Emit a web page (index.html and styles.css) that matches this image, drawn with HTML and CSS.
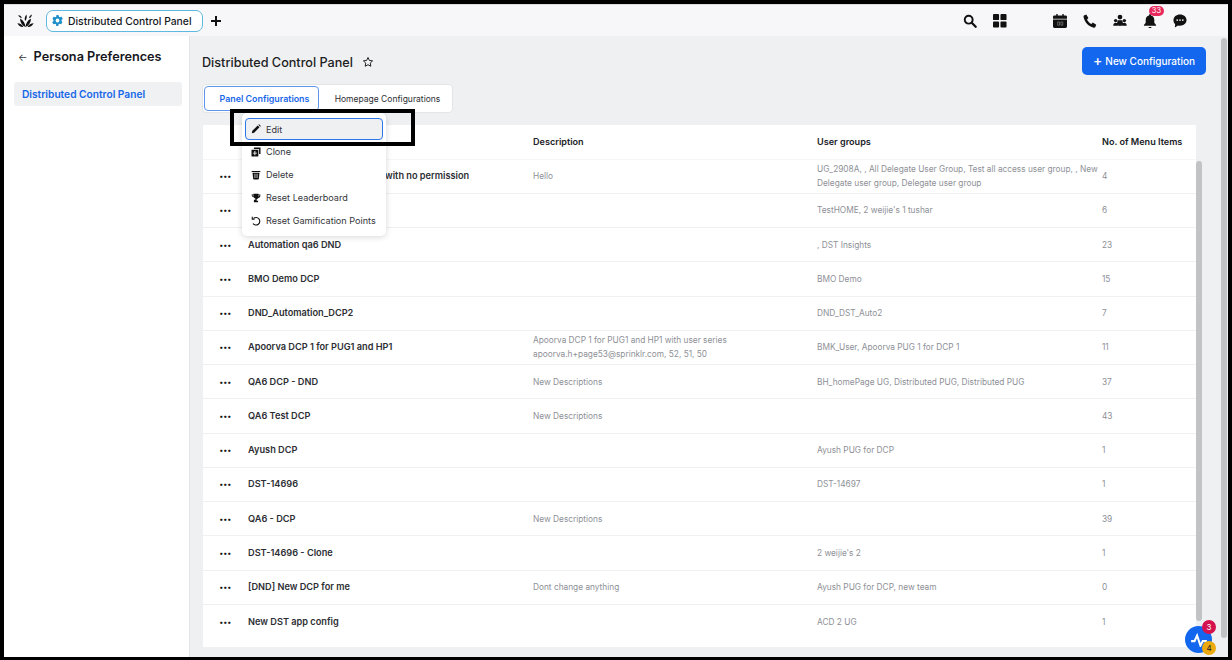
FILE: index.html
```html
<!DOCTYPE html>
<html lang="en">
<head>
<meta charset="utf-8">
<title>Distributed Control Panel</title>
<link rel="stylesheet" href="styles.css">
</head>
<body>
<div class="frame">
  <header class="topbar">
    <svg class="logo" viewBox="0 0 20 16"><path d="M10 15.500C9.500 11 7.500 7.500 3.500 5.500c.3 5 2.500 8.500 6.500 10zM10 15.500c.5-4.500 2.500-8 6.500-10-.3 5-2.500 8.500-6.500 10zM9.600 8.500C8.600 6 9 3.500 11 .8c1 2.700.6 5.200-1.400 7.700zM7.500 15.500C6 12.800 3.800 11.300.4 11.300 2 14.500 4.300 15.800 7.500 15.500zM12.500 15.500c1.500-2.700 3.700-4.200 7.100-4.200-1.600 3.200-3.900 4.500-7.100 4.200zM1.500 1.500c2.300.4 3.700 1.600 4.300 3.700-2.300-.4-3.700-1.600-4.300-3.700zM17.500.8c0 2.200-1.100 3.700-3.200 4.600 0-2.200 1.100-3.700 3.200-4.600z"/></svg>
    <div class="tab-pill">
      <svg class="gear" viewBox="0 0 24 24"><path d="M19.400 13c.1-.3.100-.7.100-1s0-.7-.1-1l2.100-1.600c.2-.2.200-.4.100-.6l-2-3.500c-.1-.2-.4-.3-.6-.2l-2.500 1a7 7 0 0 0-1.700-1L14 2.400c0-.2-.2-.4-.5-.4h-3c-.3 0-.5.200-.5.400l-.4 2.700c-.6.200-1.200.6-1.700 1l-2.500-1c-.2-.1-.5 0-.6.200l-2 3.500c-.1.200-.1.400.1.600L4.600 11c-.1.300-.1.700-.1 1s0 .7.100 1l-2.100 1.600c-.2.200-.2.400-.1.600l2 3.500c.1.200.4.300.6.200l2.500-1c.5.400 1.100.8 1.700 1l.4 2.700c0 .2.200.4.500.4h3c.3 0 .5-.2.500-.4l.4-2.700c.6-.2 1.200-.6 1.700-1l2.500 1c.2.100.5 0 .6-.2l2-3.500c.1-.2.100-.4-.1-.6zM12 15.500a3.500 3.500 0 1 1 0-7 3.500 3.500 0 0 1 0 7z"/></svg>
      <span>Distributed Control Panel</span>
    </div>
    <svg class="plus" viewBox="0 0 12 12"><path d="M6 1v10M1 6h10"/></svg>
    <div class="top-icons">
      <svg class="ticon" viewBox="0 0 16 16"><circle cx="6.500" cy="6.500" r="4.500" fill="none" stroke="#111" stroke-width="2.200"/><path d="M10 10l4.500 4.500" stroke="#111" stroke-width="2.600" stroke-linecap="round"/></svg>
      <svg class="ticon grid" viewBox="0 0 15 15"><rect x="0" y="0" width="6.500" height="6.500" rx="1"/><rect x="8" y="0" width="6.500" height="6.500" rx="1"/><rect x="0" y="8" width="6.500" height="6.500" rx="1"/><rect x="8" y="8" width="6.500" height="6.500" rx="1"/></svg>
      <svg class="ticon" viewBox="0 0 15 15"><path d="M1.500 1.500h2V0h1.500v1.500h5V0h1.500v1.500h2A1.500 1.500 0 0 1 15 3v2H0V3a1.500 1.500 0 0 1 1.500-1.500zM0 6h15v7.500a1.500 1.500 0 0 1-1.500 1.500h-12A1.500 1.500 0 0 1 0 13.500z"/><path d="M5 8.500h2v3.500H5zM8.500 8.500h2v3.500h-2z" fill="none" stroke="#777" stroke-width=".8"/></svg>
      <svg class="ticon" viewBox="0 0 15 15"><path d="M1 1.500L3.500.5l2.300 3.800-1.500 1.500c.8 2 2.500 3.800 4.700 4.800l1.500-1.500 3.700 2.400-1 2.500c-.3.500-1 .8-1.700.6C6 13.500 1.800 9 .6 3.200.4 2.500.6 1.900 1 1.500z"/></svg>
      <svg class="ticon" viewBox="0 0 16 15"><circle cx="8" cy="3" r="2.700"/><path d="M5.300 6.500h5.400l.8 4L8 13.500l-3.500-3z"/><circle cx="3" cy="7" r="1.900"/><circle cx="13" cy="7" r="1.900"/><path d="M.3 13c0-2.200 1-3.400 2.700-3.400 1 0 1.500.2 1.800.6L7 13zM15.700 13c0-2.200-1-3.400-2.700-3.400-1 0-1.500.2-1.800.6L9 13z"/></svg>
      <div class="bell-wrap">
        <svg class="ticon" viewBox="0 0 14 15"><path d="M7 0c.6 0 1 .4 1 1v.6c2.300.5 3.600 2.300 3.600 4.700v3l1.900 2.400v.8H.5v-.8L2.400 9.300v-3C2.400 3.900 3.700 2.100 6 1.600V1c0-.6.400-1 1-1zM5.500 14h3a1.500 1.500 0 0 1-3 0z"/></svg>
        <span class="count">33</span>
      </div>
      <svg class="ticon" viewBox="0 0 15 15"><path d="M7.500.5c4 0 7 2.600 7 6s-3 6-7 6c-.8 0-1.500-.1-2.200-.3L2 14.500l.3-3.500C1 9.900.5 8.300.5 6.500c0-3.400 3-6 7-6z"/><circle cx="4.500" cy="6.500" r=".9" fill="#fff"/><circle cx="7.500" cy="6.500" r=".9" fill="#fff"/><circle cx="10.500" cy="6.500" r=".9" fill="#fff"/></svg>
    </div>
  </header>
  <div class="body-row">
    <aside class="sidebar">
      <div class="side-title"><span class="back">←</span><span>Persona Preferences</span></div>
      <div class="side-item">Distributed Control Panel</div>
    </aside>
    <main class="main">
      <div class="title-row">
        <h1>Distributed Control Panel</h1>
        <svg class="star" viewBox="0 0 24 24"><path d="M12 3l2.800 5.900 6.400.8-4.700 4.400 1.200 6.400L12 17.400l-5.700 3.100 1.200-6.400-4.700-4.400 6.400-.8z"/></svg>
        <button class="new-btn"><span class="new-plus">+</span> New Configuration</button>
      </div>
      <div class="tabs">
        <div class="tab active">Panel Configurations</div>
        <div class="tab">Homepage Configurations</div>
      </div>
      <div class="table-wrap">
        <div class="card">
          <div class="row head"><span></span><span></span><span>Description</span><span>User groups</span><span>No. of Menu Items</span></div>
          <div class="row"><span class="dots">···</span><span class="name behind-menu">with no permission</span><span>Hello</span><span>UG_2908A, , All Delegate User Group, Test all access user group, , New Delegate user group, Delegate user group</span><span>4</span></div>
          <div class="row"><span class="dots">···</span><span class="name"></span><span></span><span>TestHOME, 2 weijie's 1 tushar</span><span>6</span></div>
          <div class="row"><span class="dots">···</span><span class="name">Automation qa6 DND</span><span></span><span>, DST Insights</span><span>23</span></div>
          <div class="row"><span class="dots">···</span><span class="name">BMO Demo DCP</span><span></span><span>BMO Demo</span><span>15</span></div>
          <div class="row"><span class="dots">···</span><span class="name">DND_Automation_DCP2</span><span></span><span>DND_DST_Auto2</span><span>7</span></div>
          <div class="row"><span class="dots">···</span><span class="name">Apoorva DCP 1 for PUG1 and HP1</span><span>Apoorva DCP 1 for PUG1 and HP1 with user series apoorva.h+page53@sprinklr.com, 52, 51, 50</span><span>BMK_User, Apoorva PUG 1 for DCP 1</span><span>11</span></div>
          <div class="row"><span class="dots">···</span><span class="name">QA6 DCP - DND</span><span>New Descriptions</span><span>BH_homePage UG, Distributed PUG, Distributed PUG</span><span>37</span></div>
          <div class="row"><span class="dots">···</span><span class="name">QA6 Test DCP</span><span>New Descriptions</span><span></span><span>43</span></div>
          <div class="row"><span class="dots">···</span><span class="name">Ayush DCP</span><span></span><span>Ayush PUG for DCP</span><span>1</span></div>
          <div class="row"><span class="dots">···</span><span class="name">DST-14696</span><span></span><span>DST-14697</span><span>1</span></div>
          <div class="row"><span class="dots">···</span><span class="name">QA6 - DCP</span><span>New Descriptions</span><span></span><span>39</span></div>
          <div class="row"><span class="dots">···</span><span class="name">DST-14696 - Clone</span><span></span><span>2 weijie's 2</span><span>1</span></div>
          <div class="row"><span class="dots">···</span><span class="name">[DND] New DCP for me</span><span>Dont change anything</span><span>Ayush PUG for DCP, new team</span><span>0</span></div>
          <div class="row last"><span class="dots">···</span><span class="name">New DST app config</span><span></span><span>ACD 2 UG</span><span>1</span></div>
          <div class="inner-scroll"><div class="inner-thumb"></div></div>
        </div>
      </div>
    </main>
    <div class="page-scroll"><div class="page-thumb"></div></div>
  </div>

  <div class="menu">
    <div class="menu-item selected"><svg viewBox="0 0 12 12"><path d="M1 11l.6-2.800L8 1.800l2.200 2.200L3.800 10.400zM8.800 1l.9-.8 2.100 2.100-.8.900z"/></svg>Edit</div>
    <div class="menu-item"><svg viewBox="0 0 12 12"><path d="M3.500 .6H11.400V8.500H9.700V2.300H3.500z"/><path d="M.6 3.200h8.200v8.200H.6zM4.100 4.900v2H2.200v1h1.900v2h1.100v-2h1.900v-1H5.200v-2z" fill-rule="evenodd"/></svg>Clone</div>
    <div class="menu-item"><svg viewBox="0 0 12 12"><path d="M.8 1.200h10.400v1.300H.8zM1.800 3.200h8.400l-.8 7.300a1 1 0 0 1-1 .9H3.600a1 1 0 0 1-1-.9zM4.300 4.500v5h.9v-5zm2.500 0v5h.9v-5z" fill-rule="evenodd"/></svg>Delete</div>
    <div class="menu-item"><svg viewBox="0 0 12 12"><path d="M3 .8h6v1h2.200v1.500c0 1.500-1 2.500-2.500 2.700-.4.800-1 1.300-1.900 1.500v1.700h1.700v1.800H3.500V8.200h1.700V6.500C4.300 6.300 3.700 5.800 3.300 5 1.800 4.800.8 3.800.8 2.300V1.800H3zM1.800 2.800c0 .6.400 1.100 1.200 1.300V2.800zm8.400 0H9v1.300c.8-.2 1.200-.7 1.200-1.300z" fill-rule="evenodd"/></svg>Reset Leaderboard</div>
    <div class="menu-item"><svg viewBox="0 0 12 12" class="reset"><path d="M3 3A4.500 4.500 0 1 1 2.400 9"/><path d="M1.500 1v2.800h2.800"/></svg>Reset Gamification Points</div>
  </div>
  <div class="highlight"></div>
  <div class="fab">
    <svg viewBox="0 0 16 12"><path d="M1 7h3l2.300-5 3 9 2-4H15"/></svg>
    <span class="fab-red">3</span>
    <span class="fab-yellow">4</span>
  </div>
</div>
</body>
</html>
```
FILE: styles.css
```css
* { box-sizing: border-box; }
html, body { margin: 0; height: 100%; overflow: hidden; }
body { font-family: Inter, "Liberation Sans", sans-serif; color: #16181d; background: #fff; }
.frame { position: relative; width: 1232px; height: 660px; border: 4px solid #000; border-width: 4px 4px 3px 4px; display: flex; flex-direction: column; overflow: hidden; }
.topbar { height: 32px; flex: none; background: #f7f7f9; border-top: 1px solid #dcdde0; display: flex; align-items: center; padding-left: 13px; }
.logo { width: 17px; height: 15px; fill: #111; flex: none; margin-right: 12px; }
.tab-pill { width: 157px; height: 22px; border: 1px solid #5fb8e0; border-radius: 7px; background: #fff; display: flex; align-items: center; padding-left: 4px; font-size: 10.350px; font-weight: 500; gap: 4px; white-space: nowrap; }
.gear { width: 13px; height: 13px; fill: #1d8fc9; flex: none; }
.plus { width: 12px; height: 12px; stroke: #111; stroke-width: 2; fill: none; margin-left: 7px; flex: none; }
.top-icons { margin-left: auto; display: flex; align-items: center; gap: 16px; margin-right: 41px; }
.ticon { display: block; fill: #111; width: 14px; height: 14px; flex: none; }
.grid { margin-right: 30px; }
.bell-wrap { position: relative; }
.count { position: absolute; left: 6px; top: -8px; min-width: 15px; height: 10px; border-radius: 5px; background: #e8285c; color: #fff; font-size: 7.500px; line-height: 10px; text-align: center; }
.body-row { flex: 1; display: flex; min-height: 0; }
.sidebar { width: 186px; flex: none; background: #fff; border-right: 1px solid #e4e5e8; padding: 0 7px 0 10px; }
.side-title { display: flex; align-items: center; height: 40px; padding: 1px 5px 0 4px; font-size: 12.700px; font-weight: 600; gap: 6px; margin-bottom: 6px; }
.back { font-size: 10px; font-weight: 400; color: #333; }
.side-item { height: 24px; line-height: 25px; background: #f0f1f3; border-radius: 3px; padding-left: 8px; color: #1767e8; font-size: 10.200px; font-weight: 600; white-space: nowrap; }
.main { flex: 1; min-width: 0; background: #eff0f2; padding: 0 0 0 12px; display: flex; flex-direction: column; }
.title-row { display: flex; align-items: center; height: 48px; flex: none; padding-right: 15px; padding-top: 4px; }
h1 { margin: 0; font-size: 12.650px; font-weight: 500; color: #1c1e23; }
.star { width: 12px; height: 12px; fill: none; stroke: #222; stroke-width: 2; margin-left: 9px; }
.new-btn { margin-left: auto; width: 124px; height: 28px; margin-top: -3px; background: #1267ee; color: #fff; border: 0; border-radius: 5px; font: 500 10px Inter, "Liberation Sans", sans-serif; display: flex; align-items: center; justify-content: center; gap: 3px; white-space: nowrap; }
.new-plus { font-size: 14px; line-height: 14px; }
.tabs { display: flex; width: 251px; height: 29px; flex: none; background: #fff; border: 1px solid #e4e5e8; border-radius: 4px; padding: 1px 0; align-items: stretch; }
.tab { display: flex; align-items: center; justify-content: center; font-size: 8.500px; color: #2b2d33; flex: 1; padding-left: 4px; }
.tab.active { flex: none; width: 115px; padding-left: 6px; font-size: 8.900px; color: #1767e8; font-weight: 600; border: 1px solid #5f95ec; border-radius: 4px; margin-left: 1px; }
.table-wrap { flex: 1; min-height: 0; padding: 12px 25px 10px 1px; }
.card { position: relative; background: #fff; height: 522px; display: flex; flex-direction: column; }
.row { display: grid; grid-template-columns: 45px 285px 284px 285px 1fr; height: 34.250px; flex: none; align-items: center; border-bottom: 1px solid #eff0f2; font-size: 8.300px; line-height: 14px; color: #8e9097; }
.row > span:first-child { padding-left: 16px; }
.head { color: #202227; font-size: 9.100px; font-weight: 600; height: 34.500px; border-bottom-color: #f6f6f7; }
.dots { color: #111; font-size: 13px; font-weight: 800; letter-spacing: -.6px; line-height: 10px; }
.name { color: #2c2e33; font-size: 9.200px; font-weight: 600; white-space: nowrap; }
.behind-menu { padding-left: 137px; }
.last { border-bottom: 0; }
.inner-scroll { position: absolute; right: -7px; top: 0; bottom: 0; width: 7px; background: #eff0f2; }
.inner-thumb { margin-top: 36px; height: 460px; border-radius: 3px; background: #c2c3c5; width: 6px; }
.page-scroll { width: 7px; flex: none; background: #eff0f2; }
.page-thumb { width: 6px; height: 600px; margin-top: 2px; background: #c2c3c5; border-radius: 3px; }
.menu { position: absolute; left: 238px; top: 109px; width: 144px; height: 123px; background: #fff; border-radius: 5px; box-shadow: 0 1px 6px rgba(0,0,0,.16); padding: 5px 3px 3px; font-size: 9.100px; color: #33353a; }
.menu-item { display: flex; align-items: center; height: 23px; padding-left: 6px; gap: 5px; white-space: nowrap; }
.menu-item svg { width: 10px; height: 10px; fill: #111; flex: none; }
.menu-item svg.reset { fill: none; stroke: #111; stroke-width: 1.300; }
.selected { height: 22px; background: #eff0f2; border: 1px solid #2f76ea; border-radius: 4px; padding-left: 5px; }
.highlight { position: absolute; left: 226px; top: 105px; width: 185px; height: 37px; border: 4px solid #000; pointer-events: none; }
.fab { position: absolute; left: 1181px; top: 622px; width: 27px; height: 27px; border-radius: 50%; background: #1267ee; display: flex; align-items: center; justify-content: center; }
.fab svg { width: 18px; height: 14px; fill: none; stroke: #fff; stroke-width: 1.800; }
.fab-red, .fab-yellow { position: absolute; left: 17px; width: 14px; height: 14px; border-radius: 50%; font-size: 8px; line-height: 14px; text-align: center; }
.fab-red { top: -6px; background: #d3124f; color: #fff; }
.fab-yellow { top: 15px; background: #edaa0e; color: #222; }
```
